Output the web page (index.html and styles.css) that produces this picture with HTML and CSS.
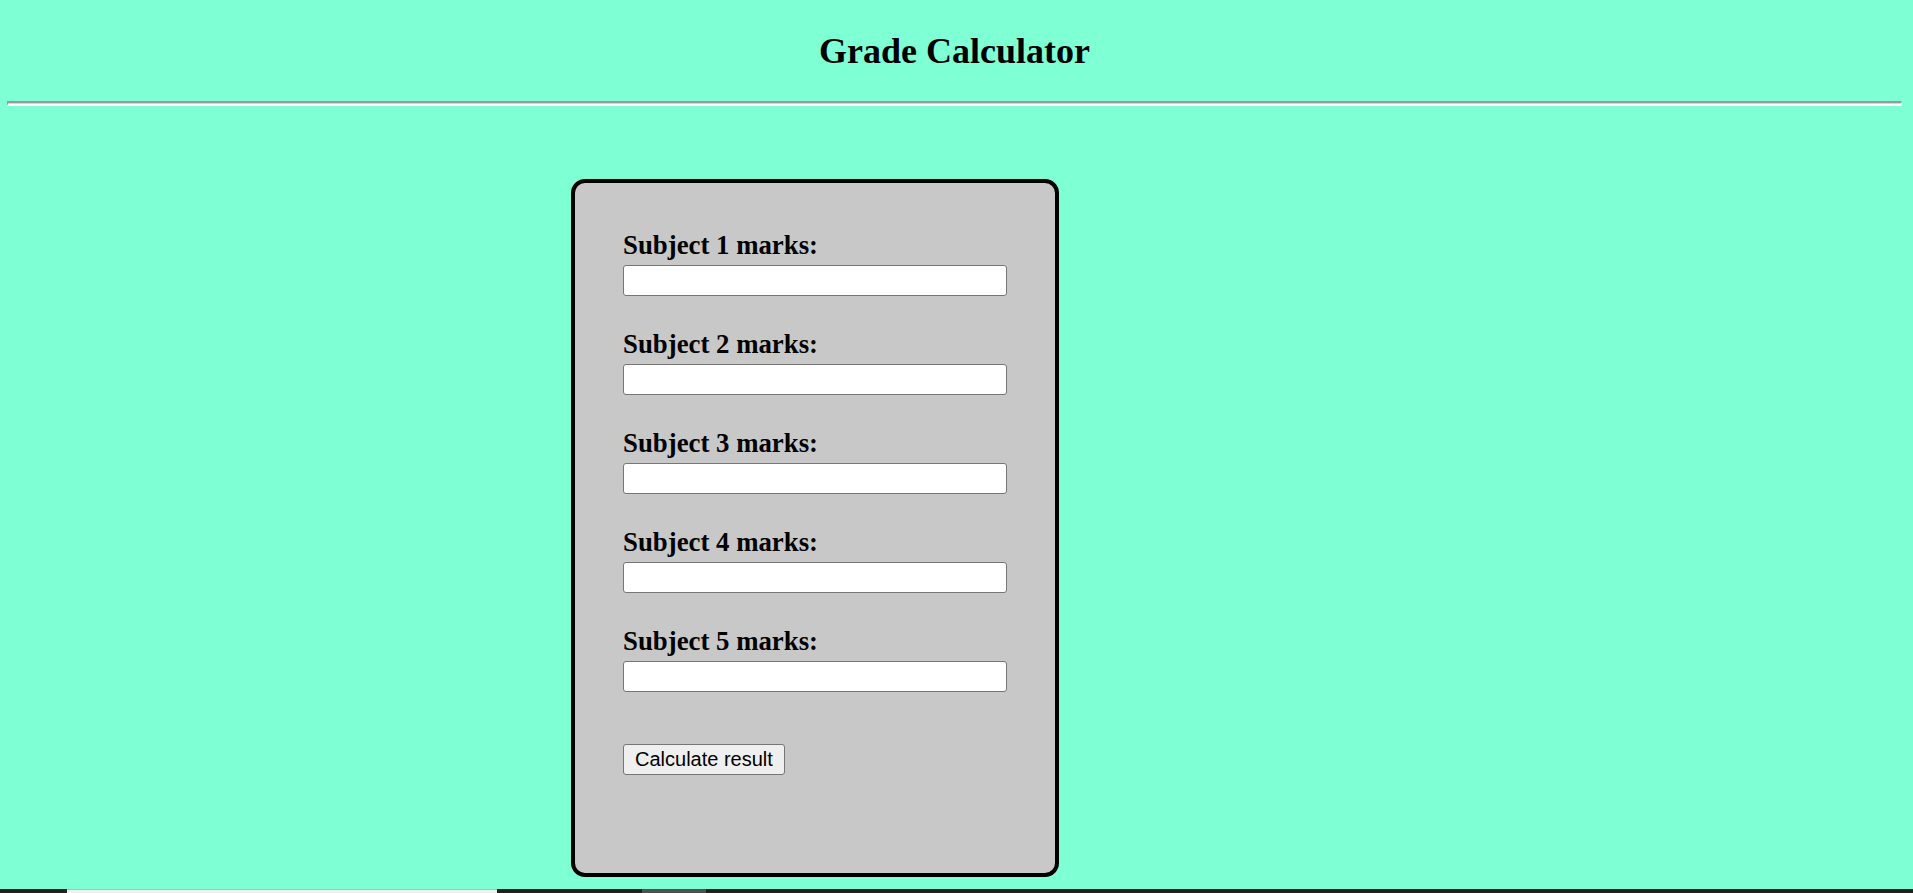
FILE: index.html
```html
<!DOCTYPE html>
<html lang="en">
<head>
<meta charset="utf-8">
<title>Grade Calculator</title>
<link rel="stylesheet" href="styles.css">
</head>
<body>
<header class="header">
  <h1 class="title">Grade Calculator</h1>
  <hr class="rule">
</header>
<main class="main">
  <form class="card">
    <div class="field">
      <label class="label" for="s1">Subject 1 marks:</label>
      <input class="input" id="s1" type="text">
    </div>
    <div class="field">
      <label class="label" for="s2">Subject 2 marks:</label>
      <input class="input" id="s2" type="text">
    </div>
    <div class="field">
      <label class="label" for="s3">Subject 3 marks:</label>
      <input class="input" id="s3" type="text">
    </div>
    <div class="field">
      <label class="label" for="s4">Subject 4 marks:</label>
      <input class="input" id="s4" type="text">
    </div>
    <div class="field field-last">
      <label class="label" for="s5">Subject 5 marks:</label>
      <input class="input" id="s5" type="text">
    </div>
    <button class="btn" type="button">Calculate result</button>
  </form>
</main>
<div class="bottombar">
  <span class="seg seg-gap1"></span>
  <span class="seg seg-light"></span>
  <span class="seg seg-gap2"></span>
  <span class="seg seg-grey"></span>
</div>
</body>
</html>
```
FILE: styles.css
```css
html, body {
  margin: 0;
  padding: 0;
}
body {
  background: #7fffd4;
  font-family: "Liberation Serif", "Times New Roman", serif;
  color: #000;
  overflow: hidden;
}
.header {
  padding: 0 11px 0 7px;
}
.title {
  margin: 0;
  padding-top: 31px;
  font-size: 36px;
  line-height: 41px;
  font-weight: bold;
  text-align: center;
}
.rule {
  margin: 29px 0 0 0;
  height: 1px;
  border-style: solid;
  border-width: 2px 1px 2px 1px;
  border-color: #9a9a9a #e8e8e8 #ffffff #9a9a9a;
}
.main {
  padding-top: 73px;
  padding-left: 571px;
}
.card {
  box-sizing: border-box;
  width: 488px;
  border: 4px solid #000;
  border-radius: 14px;
  background: #c8c8c8;
  padding: 47px 48px 47px 48px;
}
.field {
  margin-bottom: 33px;
}
.field-last {
  margin-bottom: 52px;
}
.label {
  display: block;
  font-size: 26.8px;
  line-height: 31px;
  font-weight: bold;
  margin-bottom: 4px;
}
.input {
  display: block;
  box-sizing: border-box;
  width: 100%;
  height: 31px;
  margin: 0;
  border: 1px solid #767676;
  border-radius: 3px;
  background: #fff;
  font-family: "Liberation Sans", Arial, sans-serif;
  font-size: 20px;
  padding: 0 3px;
}
.btn {
  display: block;
  box-sizing: border-box;
  height: 31px;
  margin: 0 0 51px 0;
  padding: 0 11px;
  border: 1px solid #767676;
  border-radius: 3px;
  background: #efefef;
  color: #000;
  font-family: "Liberation Sans", Arial, sans-serif;
  font-size: 20px;
  line-height: 29px;
}
.bottombar {
  position: fixed;
  left: 0;
  right: 0;
  bottom: 0;
  height: 4px;
  background: #202020;
  display: flex;
}
.seg {
  display: block;
  height: 4px;
}
.seg-gap1 { width: 67px; }
.seg-light {
  width: 430px;
  background: #f0f0f0;
  box-shadow: inset 0 1px 0 #b8b8b8;
}
.seg-gap2 { width: 145px; }
.seg-grey {
  width: 64px;
  background: #505050;
}
```
